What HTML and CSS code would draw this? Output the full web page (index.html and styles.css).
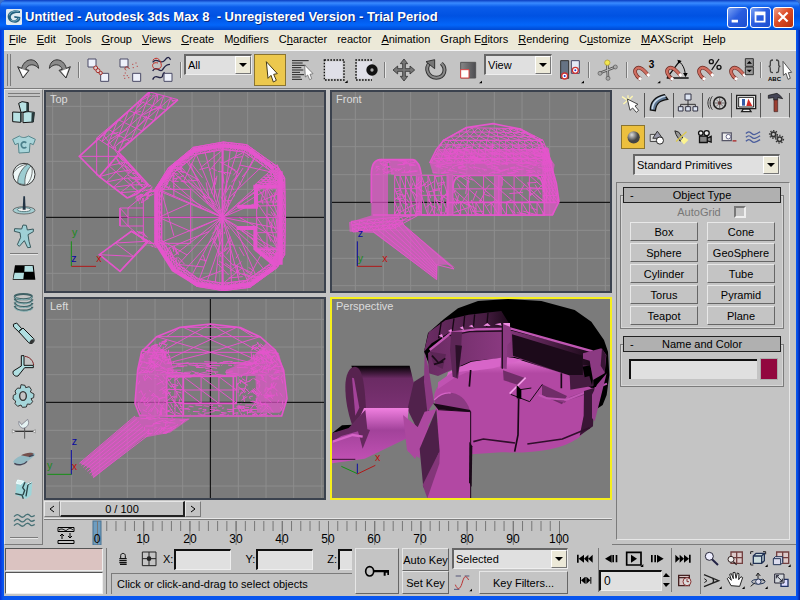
FILE: index.html
```html
<!DOCTYPE html>
<html lang="en">
<head>
<meta charset="utf-8">
<title>Untitled - Autodesk 3ds Max 8</title>
<link rel="stylesheet" href="styles.css">
</head>
<body>
<div class="window">
  <header class="titlebar">
    <svg class="app-icon" viewBox="18 24 48 48" aria-hidden="true"><rect x="18" y="24" width="48" height="48" rx="4" fill="#dfeaf2"/><path d="M60 30C44 24 24 30 23 46c0 14 12 20 24 19 10-1 15-8 14-17L43 45v5l9 2c-2 6-14 8-18 1-5-10 4-19 26-17z" fill="#24617f"/><path d="M56 31c-14-3-26 2-28 12M32 57c8 6 22 3 25-6" fill="none" stroke="#7fb2c9" stroke-width="3"/></svg>
    <h1>Untitled - Autodesk 3ds Max 8&nbsp; - Unregistered Version - Trial Period</h1>
    <div class="window-buttons">
      <button type="button" aria-label="Minimize"><svg viewBox="0 0 21 21"><rect x="4" y="13" width="7" height="3" fill="#fff"/></svg></button>
      <button type="button" aria-label="Maximize"><svg viewBox="0 0 21 21"><path d="M4 4h12v12H4zM6 8v6h8V8z" fill="#fff" fill-rule="evenodd"/></svg></button>
      <button type="button" class="close" aria-label="Close"><svg viewBox="0 0 21 21"><path d="M5 5l10 10M15 5L5 15" stroke="#fff" stroke-width="2.4"/></svg></button>
    </div>
  </header>

  <nav class="menubar" aria-label="Main menu">
    <button type="button"><u>F</u>ile</button>
    <button type="button"><u>E</u>dit</button>
    <button type="button"><u>T</u>ools</button>
    <button type="button"><u>G</u>roup</button>
    <button type="button"><u>V</u>iews</button>
    <button type="button"><u>C</u>reate</button>
    <button type="button">M<u>o</u>difiers</button>
    <button type="button">C<u>h</u>aracter</button>
    <button type="button">reactor</button>
    <button type="button"><u>A</u>nimation</button>
    <button type="button">Graph E<u>d</u>itors</button>
    <button type="button"><u>R</u>endering</button>
    <button type="button">C<u>u</u>stomize</button>
    <button type="button"><u>M</u>AXScript</button>
    <button type="button"><u>H</u>elp</button>
  </nav>

  <div class="toolbar" role="toolbar" aria-label="Main toolbar">
    <span class="grip"></span>
    <button type="button" aria-label="Undo"><svg viewBox="36 159 96 96"><path d="M116 202c-3-34-42-34-51 0l-12-5 16 34 18-23-10-3c6-16 25-19 39-3z" fill="#8a8a8a" stroke="#333" stroke-width="3"/><path d="M58 202l11 25 14-17z" fill="#fff"/></svg></button>
    <button type="button" aria-label="Redo"><svg viewBox="132 159 96 96"><path d="M148 202c3-34 42-34 51 0l12-5-13 34-21-23 10-3c-6-16-25-19-39-3z" fill="#8a8a8a" stroke="#333" stroke-width="3"/><path d="M206 202l-9 25-14-17z" fill="#fff"/></svg></button>
    <span class="sep"></span>
    <button type="button" aria-label="Select and link"><svg viewBox="246 159 96 96"><g fill="#eef1fa" stroke="#4a4a66" stroke-width="3"><path d="M264 174h24v24h-24zM302 217h24v24h-24z"/></g><g fill="#dcc" stroke="#a62f2b" stroke-width="3"><circle cx="287" cy="201" r="6"/><circle cx="294" cy="209" r="6"/><circle cx="302" cy="216" r="5"/></g></svg></button>
    <button type="button" aria-label="Unlink selection"><svg viewBox="342 159 96 96"><g fill="#eef1fa" stroke="#4a4a66" stroke-width="3"><path d="M360 174h24v24h-24zM398 217h24v24h-24z"/></g><path d="M378 208c-10-10 6-16 10-4" fill="none" stroke="#a62f2b" stroke-width="3"/><path d="M396 190h4m-2 10h4m4-14h4m0 10h4M374 216h4m-8 8h4m6 0h4m-12 8h4m8-2h4" stroke="#b55" stroke-width="3"/></svg></button>
    <button type="button" aria-label="Bind to space warp"><svg viewBox="438 159 96 96"><path d="M458 184c12-18 24 10 36-6s14-6 18-2M458 210c10-18 20 4 28-2 8-8 8-18 24-18M458 236c10-20 18 0 28-8 4-4 0-10 8-14" fill="none" stroke="#224" stroke-width="4"/><path d="M458 178c14-16 26 2 26 16 0 10-18 14-24 6s0-18 14-14" fill="none" stroke="#c33028" stroke-width="3"/><path d="M492 217h24v24h-24z" fill="#eef1fa" stroke="#4a4a66" stroke-width="3"/></svg></button>
    <span class="sep"></span>
    <div class="combo tool-combo"><select aria-label="Selection filter"><option>All</option></select><span class="arrow"></span></div>
    <button type="button" class="active" aria-label="Select object"><svg viewBox="762 159 96 96"><path d="M799 182l5 50 9-9 7 20 9-5-8-18 11-2z" fill="#fff" stroke="#443a18" stroke-width="3"/></svg></button>
    <button type="button" aria-label="Select by name"><svg viewBox="858 159 96 96"><path d="M876 179h50m-50 7h32m-32 7h40m-40 7h28m-28 7h34m-34 7h24m-24 7h36m-36 7h26m-26 7h30" stroke="#222" stroke-width="3"/><path d="M914 192l2 36 7-6 6 14 6-3-5-13 9-2z" fill="#fff" stroke="#555" stroke-width="2"/></svg></button>
    <button type="button" aria-label="Rectangular selection region"><svg viewBox="954 159 96 96"><rect x="976" y="181" width="52" height="52" fill="#e0e0e8"/><rect x="973" y="177" width="59" height="60" fill="none" stroke="#111" stroke-width="4" stroke-dasharray="5 4"/><path d="M1043 238v8h-9z"/></svg></button>
    <button type="button" aria-label="Window crossing"><svg viewBox="1050 159 96 96"><rect x="1071" y="181" width="46" height="52" fill="#e0e0e8"/><path d="M1116 177h-48v60h48" fill="none" stroke="#111" stroke-width="4" stroke-dasharray="5 4"/><circle cx="1116" cy="207" r="17" fill="#111"/><circle cx="1116" cy="207" r="5" fill="#aaa"/></svg></button>
    <span class="sep"></span>
    <button type="button" aria-label="Select and move"><svg viewBox="-36 159 96 96"><path d="M12 174l11 14h-7v15h14v-8l14 12-14 12v-8H16v15h7l-11 14-11-14h7v-15h-15v8l-14-12 14-12v8H8v-15H1z" fill="#777" stroke="#333" stroke-width="2.5"/></svg></button>
    <button type="button" aria-label="Select and rotate"><svg viewBox="60 159 96 96"><path d="M124 187c18 17 9 43-15 43s-36-27-20-44" fill="none" stroke="#333" stroke-width="12"/><path d="M124 187c18 17 9 43-15 43s-36-27-20-44" fill="none" stroke="#888" stroke-width="6"/><path d="M78 182l26-6v27z" fill="#777" stroke="#333" stroke-width="3"/></svg></button>
    <button type="button" aria-label="Select and scale"><svg viewBox="156 159 96 96"><defs><linearGradient id="scale-face"><stop offset="0" stop-color="#888"/><stop offset="1" stop-color="#4c4c50"/></linearGradient></defs><path d="M182 184h45v47h-45z" fill="url(#scale-face)" stroke="#555" stroke-width="3"/><path d="M182 206h25v25h-25z" fill="#fff" stroke="#d44" stroke-width="3"/><path d="M246 239v8h-9z"/></svg></button>
    <div class="combo tool-combo"><select aria-label="Reference coordinate system"><option>View</option></select><span class="arrow"></span></div>
    <button type="button" aria-label="Use pivot point center"><svg viewBox="462 159 96 96"><path d="M482 179h24v53h-24z" fill="#667384" stroke="#333" stroke-width="3"/><path d="M514 179h24v38h-24z" fill="#e4e8f6" stroke="#446" stroke-width="3"/><circle cx="494" cy="225" r="9" fill="#fff" stroke="#c33" stroke-width="4"/><circle cx="526" cy="208" r="9" fill="#fff" stroke="#c33" stroke-width="4"/><circle cx="494" cy="225" r="3" fill="#23c"/><circle cx="526" cy="208" r="3" fill="#23c"/><path d="M552 239v8h-9z"/></svg></button>
    <span class="sep"></span>
    <button type="button" aria-label="Select and manipulate"><svg viewBox="576 159 96 96"><path d="M622 188l2 44M600 216l46-18" stroke="#555" stroke-width="8"/><path d="M622 188l2 44M600 216l46-18" stroke="#bbb" stroke-width="3"/><g fill="#aaa" stroke="#555" stroke-width="2"><circle cx="624" cy="232" r="6"/><circle cx="600" cy="217" r="6"/><circle cx="646" cy="198" r="6"/></g><circle cx="622" cy="185" r="8" fill="#f2e650" stroke="#a9932c" stroke-width="2"/></svg></button>
    <span class="sep"></span>
    <button type="button" aria-label="Snaps toggle"><svg viewBox="690 159 96 96"><path d="M722 235c-16-10-22-26-12-33s22 5 36 22" fill="none" stroke="#6b2922" stroke-width="11"/><path d="M722 235c-16-10-22-26-12-33s22 5 36 22" fill="none" stroke="#cf6e60" stroke-width="7"/><path d="M717 231l6 5M742 219l6 6" stroke="#fff" stroke-width="9"/><text x="746" y="200" class="glyph">3</text><path d="M781 239v8h-9z"/></svg></button>
    <button type="button" aria-label="Angle snap toggle"><svg viewBox="786 159 96 96"><path d="M800 231h66M802 229l38-50" stroke="#111" stroke-width="4"/><path d="M838 182c12 10 18 26 18 44" fill="none" stroke="#111" stroke-width="3"/><path d="M832 176l13 4-9 8zM849 216l14 0-6 12z"/><path d="M818 235c-16-10-22-26-12-33s22 5 36 22" fill="none" stroke="#6b2922" stroke-width="11"/><path d="M818 235c-16-10-22-26-12-33s22 5 36 22" fill="none" stroke="#cf6e60" stroke-width="7"/><path d="M813 231l6 5M838 219l6 6" stroke="#fff" stroke-width="9"/></svg></button>
    <button type="button" aria-label="Percent snap toggle"><svg viewBox="882 159 96 96"><path d="M914 235c-16-10-22-26-12-33s22 5 36 22" fill="none" stroke="#6b2922" stroke-width="11"/><path d="M914 235c-16-10-22-26-12-33s22 5 36 22" fill="none" stroke="#cf6e60" stroke-width="7"/><path d="M909 231l6 5M934 219l6 6" stroke="#fff" stroke-width="9"/><g fill="none" stroke="#111" stroke-width="4"><circle cx="934" cy="182" r="6"/><circle cx="957" cy="199" r="6"/><path d="M957 174l-22 33"/></g></svg></button>
    <button type="button" aria-label="Spinner snap toggle"><svg viewBox="978 159 96 96"><path d="M1010 235c-16-10-22-26-12-33s22 5 36 22" fill="none" stroke="#6b2922" stroke-width="11"/><path d="M1010 235c-16-10-22-26-12-33s22 5 36 22" fill="none" stroke="#cf6e60" stroke-width="7"/><path d="M1005 231l6 5M1030 219l6 6" stroke="#fff" stroke-width="9"/><path d="M1036 173h24v23h-24zM1036 198h24v23h-24z" fill="#999" stroke="#333" stroke-width="3"/><path d="M1040 188l8-8 8 8zM1040 206l8 8 8-8z"/></svg></button>
    <span class="sep"></span>
    <button type="button" aria-label="Named selection sets"><svg viewBox="1092 159 96 96"><path d="M1119 177c-9 0-8 4-8 11s0 8-5 8c5 0 5 2 5 9s0 10 8 10M1128 177c9 0 8 4 8 11s0 8 5 8c-5 0-5 2-5 9s0 10-8 10" fill="none" stroke="#444" stroke-width="4"/><text x="1104" y="239" class="glyph tiny">ABC</text><path d="M1149 181l1 42 8-6 6 18 7-3-6-17 10-1z" fill="#fff" stroke="#555" stroke-width="3"/></svg></button>
  </div>

  <main class="workspace">
    <div class="sidebar" role="toolbar" aria-label="reactor toolbar" aria-orientation="vertical">
      <span class="grip"></span>
      <button type="button" aria-label="Rigid body collection"><svg viewBox="21 33 93 93"><g fill="#b8e2e4" stroke="#111" stroke-width="3"><path d="M53 52l10-5 19 3v27l-22 2zM35 78l24 1v30l-24-2zM66 80l10-4 24 3-3 29-31 2z"/></g><path d="M76 50l6 1v26l-6 1zM92 80l8-1-2 29-7 1zM57 80h5v28h-5z" fill="#26393b"/></svg></button>
      <button type="button" aria-label="Cloth collection"><svg viewBox="21 126 93 93"><path d="M55 150c8 6 18 6 27 0l21 10-6 16-10-4-2 27-31 2-2-29-10 4-7-16z" fill="#a9d5da" stroke="#56868c" stroke-width="3"/><path d="M76 170c-10-6-18 2-14 11 3 6 10 6 14 2" fill="none" stroke="#4b7f8a" stroke-width="5"/></svg></button>
      <button type="button" aria-label="Soft body collection"><svg viewBox="21 222 93 93"><circle cx="69" cy="268" r="33" fill="#eef8f8" stroke="#333" stroke-width="3"/><path d="M50 293c0-22 12-42 30-56l10 6c-14 14-20 36-18 55-8 1-16-1-22-5z" fill="#9dcdd2" stroke="#333" stroke-width="2"/><path d="M36 264c10-14 24-24 44-27M92 244c5 18-2 42-14 54" fill="none" stroke="#333" stroke-width="2"/></svg></button>
      <button type="button" aria-label="Rope collection"><svg viewBox="21 315 93 93"><ellipse cx="69" cy="376" rx="33" ry="11" fill="#a5cfd3" stroke="#444" stroke-width="2"/><ellipse cx="69" cy="374" rx="20" ry="6" fill="#eee" stroke="#5a7f83" stroke-width="3"/><path d="M67 334h5l2 40h-9z" fill="#234"/></svg></button>
      <button type="button" aria-label="Deforming mesh collection"><svg viewBox="21 407 93 93"><path d="M66 419l10 1 3 14 18-3v8l-16 9 3 20 5 18-9 1-10-21-15 17-6-5 10-22-2-14-17-4 1-8 21 1z" fill="#9fd0d6" stroke="#39595d" stroke-width="3"/></svg></button>
      <span class="rule"></span>
      <button type="button" aria-label="Plane"><svg viewBox="21 519 93 93"><path d="M42 544h56l5 43H35z" fill="#000"/><path d="M71 546h24l2 17H70zM41 566h28l-2 19H37z" fill="#b3dfe1"/></svg></button>
      <button type="button" aria-label="Spring"><svg viewBox="21 612 93 93"><g fill="none" stroke="#3f6165" stroke-width="6"><ellipse cx="67" cy="638" rx="26" ry="8"/><path d="M41 644c2 18 53 18 53 2M41 655c2 18 53 18 53 2M41 666c2 18 53 18 53 2"/></g><path d="M41 638c2 12 53 12 53 0M41 648c2 15 53 15 53 2M41 659c2 15 53 15 53 2M41 670c2 15 53 15 53 2" fill="none" stroke="#a9d9dc" stroke-width="2"/></svg></button>
      <button type="button" aria-label="Linear dashpot"><svg viewBox="21 705 93 93"><path d="M37 721l10-4 15 17-9 9-15-14zM53 743l13-11 32 32c5 10-6 19-15 12z" fill="#b0dfe1" stroke="#111" stroke-width="3"/><ellipse cx="92" cy="773" rx="5" ry="8" transform="rotate(45 92 773)" fill="#333"/></svg></button>
      <button type="button" aria-label="Angular dashpot"><svg viewBox="21 798 93 93"><path d="M61 815h8v29h28v7H71L51 876c-10 3-18-6-14-15l24-15z" fill="#b0dfe1" stroke="#111" stroke-width="3"/><path d="M72 817c14 2 24 12 26 26" fill="none" stroke="#7a1f1f" stroke-width="3"/></svg></button>
      <button type="button" aria-label="Motor"><svg viewBox="21 891 93 93"><path d="M60 902l12 2 2 7 11-3 6 9-3 7 11 6-1 11-8 3 5 9-7 8-9-1-3 9-12 1-4-7-10 4-8-8 2-8-8-6 1-11 8-4-3-9 8-9 8 1z" fill="#a5d6da" stroke="#333" stroke-width="3"/><ellipse cx="66" cy="936" rx="10" ry="13" fill="#c4c4c4" stroke="#333" stroke-width="4"/></svg></button>
      <button type="button" aria-label="Wind"><svg viewBox="21 984 93 93"><path d="M36 1042h66" stroke="#333" stroke-width="4"/><path d="M71 1032v32" stroke="#555" stroke-width="3"/><path d="M54 1012l8 10 18-16 3 9c-1 12-8 16-17 18-10-3-14-12-12-21z" fill="#e4f2f2" stroke="#667" stroke-width="2"/><path d="M34 1037l10 5-10 5zM103 1037l-8 5 8 5z" fill="#fff" stroke="#333" stroke-width="1"/></svg></button>
      <button type="button" aria-label="Toy car"><svg viewBox="21 1077 93 93"><path d="M36 1134c8-18 36-22 48-28 12-2 20 2 18 8l-22 18c-12 12-36 12-44 2z" fill="#93bac4"/><path d="M60 1114c12-8 32-10 38-5l-12 10z" fill="#75504d"/><path d="M40 1138c12 8 30 4 38-6M84 1118l14-5" stroke="#445" stroke-width="4" fill="none"/></svg></button>
      <button type="button" aria-label="Fracture"><svg viewBox="21 1167 93 93"><path d="M48 1184l22 3 4 8 20-5-3 40-16 12-32-13z" fill="#9ed5d9"/><path d="M72 1192l-7 16 6 8-5 14M43 1226l20 4 4 11M91 1192l-10 6-6 36" fill="none" stroke="#2b4548" stroke-width="4"/><path d="M50 1185l18 4-8 9-14-3zM78 1198l14-7" stroke="#eff" stroke-width="3" fill="#dff2f2"/></svg></button>
      <button type="button" aria-label="Water"><svg viewBox="21 1259 93 93"><path d="M39 1294c7-8 12-8 18-2s11 4 15-1 10-6 15 0 8 3 14-1M39 1308c7-8 12-8 18-2s11 4 15-1 10-6 15 0 8 3 14-1M39 1321c7-8 12-8 18-2s11 4 15-1 10-6 15 0 8 3 14-1" fill="none" stroke="#456f74" stroke-width="4"/></svg></button>
      <span class="rule"></span>
    </div>

    <div class="stage">
      <div class="viewports">
        <section class="viewport" aria-label="Top viewport">
          <svg viewBox="18 12 834 597" preserveAspectRatio="xMidYMid slice">
            <path class="grid" d="M38 0V620M122 0V620M206 0V620M290 0V620M374 0V620M456 0V620M539 0V620M623 0V620M707 0V620M791 0V620M0 55H860M0 139H860M0 220H860M0 304H860M0 472H860M0 556H860"/>
            <path class="axis" d="M0 388H860"/>
            <path class="mesh" id="mesh-top"/>
            <path class="mesh bold" d="M330 10L118 205L178 266L262 330M414 35L235 192L325 290L290 318L262 330M178 266L235 200M178 500L240 550L325 460L274 430ZM240 360v54M350 300V465L400 545M590 355h60v-62M590 422h58v62h66M547 170V600"/>
            <path class="mesh heavy" d="M400 234L350 304V466L400 545L470 588L550 600L630 590L706 536M400 234L465 185L550 172L620 180L700 240M722 250V530"/>
            <path class="mesh heavy" d="M640 296h70M648 296v60h-55M590 420h56v62l60 50"/>
            <path class="ax-y" d="M94 460v74"/><path class="ax-x" d="M94 535h74"/>
            <text x="96" y="444" class="t-y">y</text><text x="94" y="522" class="t-z">z</text><text x="169" y="522" class="t-x">x</text>
          </svg>
          <h2>Top</h2>
        </section>
        <section class="viewport" aria-label="Front viewport">
          <svg viewBox="12 12 834 597" preserveAspectRatio="xMidYMid slice">
            <path class="grid" d="M82 0V620M166 0V620M248 0V620M332 0V620M416 0V620M499 0V620M582 0V620M665 0V620M748 0V620M832 0V620M0 94H860M0 176H860M0 260H860M0 427H860M0 511H860M0 593H860"/>
            <path class="axis" d="M0 343H860"/>
            <path class="mesh fill" d="M305 225l25-40h320l30 45-5 32-30 2-60-5H370l-55-2zM355 250h20v132h-20zM498 260h24v122h-24zM645 262h36l10 80-15 40h-30zM130 382V260q0-45 30-48l20 4v166zM180 215h75q20 5 25 45h-90zM265 240l15 20v122h-14zM132 382l80 0 5 20 165 138-25-10-28 0-2 45-190-140-72-4-2-28z"/>
            <path class="mesh" id="mesh-front"/>
            <path class="mesh bold" d="M305 225l20-40 22-28 68-38 80-12 82 16 60 38 28 55 20 70 8 55-20 40H135M130 345v-85q0-42 25-45h100q20 5 25 45M375 300q0-38 35-38h88M522 262h90q35 0 35 50M355 343h330"/>
            <path class="ax-z" d="M88 460v74"/><path class="ax-x" d="M88 535h74"/>
            <text x="89" y="446" class="t-z">z</text><text x="89" y="522" class="t-y">y</text><text x="163" y="522" class="t-x">x</text>
          </svg>
          <h2>Front</h2>
        </section>
        <section class="viewport" aria-label="Left viewport">
          <svg viewBox="138 27 834 597" preserveAspectRatio="xMidYMid slice">
            <path class="grid" d="M215 0V640M299 0V640M382 0V640M465 0V640M548 0V640M715 0V640M798 0V640M881 0V640M965 0V640M120 88H990M120 171H990M120 254H990M120 421H990M120 505H990M120 588H990"/>
            <path class="axis" d="M120 337H990M631 0V640"/>
            <path class="mesh fill" d="M413 240l10-45 45-35 45 55 10 30 60 10-10 8h-70v113h-78l-18-39zM850 240l-12-45-40-35-50 50-70 30v18h88l5 110h68l20-30zM405 380L240 520l30 15 10 30 150-122 80-15 60-42z"/>
            <path class="mesh" id="mesh-left"/>
            <path class="mesh bold" d="M413 240l12-55 45-45 70-28 91-10 90 11 60 28 45 40 25 60 10 85-16 52H420l-15-38zM500 258h210M540 340h170M550 260v115M700 260v115"/>
            <path class="ax-z" d="M214 480v74"/><path class="ax-y" d="M142 553h72"/>
            <text x="215" y="464" class="t-z">z</text><text x="141" y="538" class="t-y">y</text><text x="215" y="539" class="t-x">x</text>
          </svg>
          <h2>Left</h2>
        </section>
        <section class="viewport current" aria-label="Perspective viewport">
          <svg viewBox="12 12 834 597" preserveAspectRatio="xMidYMid slice">
            <defs>
              <linearGradient id="tube" x2="0" y2="1"><stop offset="0" stop-color="#000"/><stop offset=".3" stop-color="#6b2b64"/><stop offset="1" stop-color="#7a3172"/></linearGradient>
              <linearGradient id="wall"><stop offset="0" stop-color="#6a2b63"/><stop offset=".45" stop-color="#8a3980"/><stop offset="1" stop-color="#150713"/></linearGradient>
              <linearGradient id="slope" x2="0" y2="1"><stop offset="0" stop-color="#f080e0"/><stop offset=".4" stop-color="#a2429a"/><stop offset="1" stop-color="#c452b6"/></linearGradient>
              <linearGradient id="floor" x2="0" y2="1"><stop offset="0" stop-color="#e878d8"/><stop offset=".16" stop-color="#b248a3"/><stop offset="1" stop-color="#b248a3"/></linearGradient>
              <linearGradient id="rim"><stop offset="0" stop-color="#6d2d66"/><stop offset=".7" stop-color="#461c41"/><stop offset="1" stop-color="#190817"/></linearGradient>
            </defs>
            <path fill="#000" d="M288 170l12-56 48-42 42-32 60-22 90-6 100 6 100 27 50 35 38 55 12 35 4 70-8 60-12 30-30 20-250-130-240-10z"/>
            <path fill="url(#rim)" d="M288 170l14-58 50-36 70-17 98-11 28 45-60 18-125 2-52 32z"/>
            <path d="M340 80l-8 50M378 70l-6 45M410 62l-4 42M440 58l-4 42M480 54l-4 42" stroke="#160814" stroke-width="4"/>
            <path fill="#ef8be2" d="M332 122l10-5 4 12zM360 108l10-6 4 12zM395 98l10-4 3 12zM422 94l10-5 6 9zM466 92l12-8 10 9zM500 88l18-4 4 8zM526 84h20v13h-20z"/>
            <path fill="url(#wall)" d="M300 175l64-60 158-15 278 70-5 110-60-30-175-64-130 12-100 45-28-8z"/>
            <path fill="#1c0a1a" d="M552 118l212 64-2 62-35-2-172-60z"/>
            <path d="M305 165l65-52 75-10 104-2 245 68" fill="none" stroke="#c157b4" stroke-width="7"/>
            <path d="M365 122l60-12 100-2" fill="none" stroke="#220d20" stroke-width="4"/>
            <path fill="url(#floor)" d="M318 305C325 255 390 205 475 195L555 188L730 243L800 285C815 330 800 385 752 428C700 465 620 475 520 472L430 478L240 470L235 430L330 380Z"/>
            <path fill="#d765c8" d="M360 232l70-32 105-14 50 8-90 26-80 10-60 20z"/>
            <path fill="#c053b2" d="M330 262l40-28 60-8-50 22-50 34z"/>
            <path fill="#5c2656" d="M306 170l48 8-10 44-28-14zM370 110h32l-4 76-8 65-16-6-8-80z"/>
            <path d="M312 182l20 22 20-14M318 208l28-8" stroke="#1c0a1a" stroke-width="5" fill="none"/>
            <path fill="#2b1029" d="M382 150l20 2-8 60-8 36z"/>
            <path fill="#8b3a82" d="M523 86l25 10v44l-10 10-2 72-18-3z"/>
            <path d="M523 86v135" stroke="#220d20" stroke-width="4"/>
            <path fill="#702d68" d="M525 226l68 24-22 20-44-14zM642 268l75 35-15 25-60-28z"/>
            <path fill="#8a3980" d="M640 302l70 22 15-18 90-32-10 14-92 30-40-4z"/>
            <path fill="#451b40" d="M725 240l40 0 0-30 28 2 4 60-70 12z"/>
            <path fill="#000" d="M764 215l22-4 10 30-4 30-8-28-14 4z"/>
            <path fill="#8b3a82" d="M765 175l55-15 15 20-5 55-35 20-10-58-20-6z"/>
            <path d="M632 300l25 10 60 4 120-48" fill="none" stroke="#c157b4" stroke-width="6"/>
            <path fill="#3a1636" d="M768 288l32-10-5 116-40 28 12-60zM822 160l12 20-4 52-12-20z"/>
            <path fill="#9a4190" d="M836 235l-16 64-20 80-8-10v-70l15-30z"/>
            <path d="M605 320l38-52M605 320l-57-22M570 285l40-6" fill="none" stroke="#1b0919" stroke-width="3"/>
            <path d="M545 296l48-48" stroke="#f5a0ea" stroke-width="5"/>
            <path fill="#000" d="M566 270l14 14v28l-14-2z"/>
            <path d="M572 310l-2 110-10 50M428 225l-4 50M700 235v45" fill="none" stroke="#190817" stroke-width="5"/>
            <path d="M436 440l30-8 95 12M598 447l105-15 82-34" fill="none" stroke="#300f2c" stroke-width="5"/>
            <path fill="#8b3a82" d="M318 315c30-35 90-30 108 32l-98-5z"/>
            <path d="M318 315c15-15 32-23 50-21" fill="none" stroke="#d765c8" stroke-width="4"/>
            <path fill="#190817" d="M315 325l112 20v6l-97-8z"/>
            <path fill="#51224c" d="M256 262l34-22 14 110-32 62-34-70 2-40z"/>
            <path fill="#8b3a82" d="M290 170l12 52 16 100-20 30-10-92z"/>
            <path fill="url(#tube)" d="M70 212h175l12 50-18 78H110z"/>
            <path fill="#57234f" d="M52 275c0-35 12-60 28-60 22 0 30 45 34 130l-42 44c-12-35-20-74-20-114z"/>
            <path fill="#a4439a" d="M72 248l6 2 16 88-12 24z"/>
            <path fill="url(#slope)" d="M108 339h134l-8 92-124 60-98 14v-70l68-35z"/>
            <path fill="#000" d="M12 415l30-24 32-2-12 14z"/>
            <path fill="#65295e" d="M12 440v-25l50-16 50-54 6 58 8 2-22 56-14-52-50 14z"/>
            <path fill="#ac489f" d="M225 360l55 45-5 85-38-24zM290 350l36-8-50 100-14 50-24-26z"/>
            <path d="M14 440l60-20 30 5" fill="none" stroke="#d765c8" stroke-width="7"/>
            <path d="M12 493h70" stroke="#3a1636" stroke-width="3"/>
            <path fill="#b248a3" d="M329 344l98 6 2 262H299l-12-64 42-78z"/>
            <path fill="#4d2049" d="M325 343l10 126-49 110-11-118z"/>
            <path fill="#833679" d="M336 466l-2 40-36 104-14-40z"/>
            <path d="M330 344l98 6v260" fill="none" stroke="#1b0919" stroke-width="3"/>
            <path fill="#1b0919" d="M424 440l9 14-2 122-8-14z"/>
            <path class="ax-y" d="M40 514l48 22"/><path class="ax-z" d="M88 506v30"/><path class="ax-x" d="M88 537l54-26"/>
            <text x="141" y="498" class="t-x">x</text>
          </svg>
          <h2>Perspective</h2>
        </section>
      </div>

      <div class="time-slider">
        <button type="button" aria-label="Previous frame"><svg viewBox="0 0 14 14"><path d="M9 4L5 7l4 3" fill="none" stroke="#000"/></svg></button>
        <button type="button" class="thumb">0 / 100</button>
        <button type="button" aria-label="Next frame"><svg viewBox="0 0 14 14"><path d="M5 4l4 3-4 3" fill="none" stroke="#000"/></svg></button>
      </div>
      <div class="trackbar">
        <button type="button" aria-label="Open mini curve editor"><svg viewBox="0 0 18 18"><path d="M1 1.500h16v4H1zM1 14.500h16v3H1z" fill="none" stroke="#000"/><path d="M2 4c4-3 6 2 8 0s4-2 6 0" fill="none" stroke="#000"/><path d="M5 8v5M3 10l2-2 2 2M13 7v5M11 10l2 2 2-2" fill="none" stroke="#000"/></svg></button>
        <svg class="ruler" viewBox="80 520 532 25" preserveAspectRatio="xMinYMin slice" role="img" aria-label="Frames 0 to 100">
          <rect x="93" y="521" width="8" height="24" fill="#6e9dc0" stroke="#48718f"/>
          <path d="M97 526H560" stroke="#777" stroke-width="10" stroke-dasharray="1 8.240"/>
          <path d="M97 533H560" stroke="#777" stroke-width="24" stroke-dasharray="1 45.200"/>
          <g text-anchor="middle"><text x="97" y="543">0</text><text x="143" y="543">10</text><text x="190" y="543">20</text><text x="236" y="543">30</text><text x="282" y="543">40</text><text x="328" y="543">50</text><text x="374" y="543">60</text><text x="420" y="543">70</text><text x="467" y="543">80</text><text x="513" y="543">90</text><text x="559" y="543">100</text></g>
        </svg>
      </div>
    </div>

    <aside class="panel" aria-label="Command panel">
      <div class="tabs">
        <button type="button" class="selected" aria-label="Create"><svg viewBox="12 12 84 84"><path d="M30 38l18 12M34 60l12-10M48 34v16M62 36L48 50" stroke="#fff7b0" stroke-width="4"/><path d="M46 45l8 34 8-7 11 13 7-6-11-13 9-5z" fill="#fff" stroke="#444" stroke-width="3"/></svg></button>
        <button type="button" aria-label="Modify"><svg viewBox="96 12 84 84"><path d="M112 78c0-24 16-40 42-46l10 14c-24 3-34 12-37 34z" fill="#5d7692" stroke="#111" stroke-width="4"/><path d="M118 76c0-22 15-34 40-40" fill="none" stroke="#c8d9ea" stroke-width="5"/></svg></button>
        <button type="button" aria-label="Hierarchy"><svg viewBox="183 12 84 84"><path d="M225 46v24M203 70V61h44v9" fill="none" stroke="#333" stroke-width="3"/><g fill="#dde5f2" stroke="#334" stroke-width="3"><path d="M216 30h18v18h-18zM196 68h14v13h-14zM218 68h14v13h-14zM240 68h14v13h-14z"/></g></svg></button>
        <button type="button" aria-label="Motion"><svg viewBox="270 12 84 84"><circle cx="320" cy="57" r="18" fill="#ccc" stroke="#222" stroke-width="5"/><circle cx="320" cy="57" r="5" fill="#922"/><path d="M320 42v30M305 57h30M309 46l22 22M331 46l-22 22" stroke="#444" stroke-width="2"/><path d="M298 37c-9 11-9 29 0 40M290 40c-7 10-7 24 0 34" fill="none" stroke="#333" stroke-width="3"/></svg></button>
        <button type="button" aria-label="Display"><svg viewBox="357 12 84 84"><path d="M371 34h57v40h-57zM391 75h18l5 8h-28z" fill="#eee" stroke="#222" stroke-width="4"/><path d="M377 40h45v29h-45z" fill="#fff" stroke="#222" stroke-width="3"/><path d="M387 45h9v20h-9z" fill="#345ca8"/><path d="M400 66l6-22 12 22z" fill="#d42a25"/></svg></button>
        <button type="button" aria-label="Utilities"><svg viewBox="441 12 84 84"><path d="M463 34l26-6 10 7 7 9-15-3v7h-12v-7l-16 2z" fill="#445" stroke="#111" stroke-width="2"/><path d="M480 48h11v35h-11z" fill="#9c3e30" stroke="#422" stroke-width="2"/></svg></button>
      </div>
      <div class="categories">
        <button type="button" class="active" aria-label="Geometry"><svg viewBox="29 122 68 68"><defs><radialGradient id="ball" cx=".35" cy=".3"><stop offset="0" stop-color="#ddd"/><stop offset="1" stop-color="#444"/></radialGradient></defs><circle cx="65" cy="157" r="19" fill="url(#ball)"/></svg></button>
        <button type="button" aria-label="Shapes"><svg viewBox="101 122 68 68"><path d="M114 148h24v22h-24z" fill="#ddd" stroke="#444" stroke-width="3"/><path d="M136 138l16 22h-30z" fill="#99a" stroke="#333" stroke-width="3"/><circle cx="144" cy="167" r="11" fill="#fff" stroke="#222" stroke-width="3"/></svg></button>
        <button type="button" aria-label="Lights"><svg viewBox="173 122 68 68"><path d="M188 137l12 4 14 20-10 8-12-20z" fill="#999" stroke="#222" stroke-width="3"/><path d="M206 167l10-12 14 10-14 14z" fill="#fcf490"/><path d="M192 170l32-30" stroke="#ddc94c" stroke-width="4"/></svg></button>
        <button type="button" aria-label="Cameras"><svg viewBox="245 122 68 68"><path d="M262 153h24v20h-24zM286 160l12-6v18l-12-4z" fill="#888" stroke="#111" stroke-width="4"/><circle cx="266" cy="144" r="7" fill="#eee" stroke="#111" stroke-width="4"/><circle cx="284" cy="144" r="8" fill="#eee" stroke="#111" stroke-width="4"/></svg></button>
        <button type="button" aria-label="Helpers"><svg viewBox="317 122 68 68"><path d="M330 143h28v24h-28z" fill="#eee" stroke="#556" stroke-width="4"/><circle cx="349" cy="155" r="7" fill="#fff" stroke="#668" stroke-width="3"/><path d="M362 168h12" stroke="#a22" stroke-width="4"/></svg></button>
        <button type="button" aria-label="Space warps"><svg viewBox="389 122 68 68"><path d="M401 145c8-8 12-6 18 0s12 4 26-5M401 157c8-8 12-6 18 0s12 4 26-5M401 169c8-8 12-6 18 0s12 4 26-5" fill="none" stroke="#4a5d9c" stroke-width="4"/></svg></button>
        <button type="button" aria-label="Systems"><svg viewBox="461 122 68 68"><g fill="none" stroke="#333"><circle cx="484" cy="148" r="7" stroke-width="5"/><circle cx="484" cy="148" r="12" stroke-width="4" stroke-dasharray="4 5"/><circle cx="503" cy="163" r="7" stroke-width="5"/><circle cx="503" cy="163" r="12" stroke-width="4" stroke-dasharray="4 5"/></g></svg></button>
      </div>
      <div class="combo category-combo"><select aria-label="Object category"><option>Standard Primitives</option></select><span class="arrow"></span></div>
      <div class="rollups">
        <section class="rollup">
          <h2><button type="button"><span>-</span>Object Type</button></h2>
          <div class="rollup-body">
            <label class="autogrid">AutoGrid <input type="checkbox" disabled></label>
            <div class="object-types">
              <button type="button">Box</button><button type="button">Cone</button>
              <button type="button">Sphere</button><button type="button">GeoSphere</button>
              <button type="button">Cylinder</button><button type="button">Tube</button>
              <button type="button">Torus</button><button type="button">Pyramid</button>
              <button type="button">Teapot</button><button type="button">Plane</button>
            </div>
          </div>
        </section>
        <section class="rollup">
          <h2><button type="button"><span>-</span>Name and Color</button></h2>
          <div class="rollup-body name-row">
            <input type="text" aria-label="Object name">
            <button type="button" class="swatch" aria-label="Object color"></button>
          </div>
        </section>
      </div>
    </aside>
  </main>

  <footer class="statusbar">
    <div class="listener">
      <input type="text" class="macro" aria-label="Macro recorder">
      <input type="text" aria-label="Script listener">
    </div>
    <div class="status">
      <div class="coords">
        <button type="button" aria-label="Selection lock"><svg viewBox="110 170 48 48"><path d="M125 192v-8c0-9 14-9 14 0v8" transform="translate(2)" fill="none" stroke="#111" stroke-width="3"/><path d="M123 193h22M123 199h22M123 205h22M125 210h20" stroke="#111" stroke-width="4"/></svg></button>
        <button type="button" aria-label="Absolute mode"><svg viewBox="424 170 48 48"><path d="M428 173h41v41h-41zM448 173v41M428 193h41" fill="none" stroke="#222" stroke-width="3"/><circle cx="448" cy="193" r="7" fill="#222"/></svg></button>
        <label>X:<input type="text"></label>
        <label>Y:<input type="text"></label>
        <label>Z:<input type="text"></label>
      </div>
      <output>Click or click-and-drag to select objects</output>
    </div>
    <button type="button" class="set-keys" aria-label="Set keys"><svg viewBox="1080 195 96 60"><ellipse cx="1106" cy="226" rx="12" ry="14" fill="none" stroke="#000" stroke-width="5"/><path d="M1117 222h47v15h-5v-7h-5v9h-6v-10h-31z"/></svg></button>
    <div class="auto-set">
      <button type="button">Auto Key</button>
      <button type="button">Set Key</button>
    </div>
    <div class="key-options">
      <div class="combo"><select aria-label="Selection list"><option>Selected</option></select><span class="arrow"></span></div>
      <div class="filters">
        <button type="button" class="flat" aria-label="Default tangents"><svg viewBox="158 232 66 66"><path d="M169 244h16M196 244h14M164 284h16" stroke="#557" stroke-width="3"/><path d="M168 270c6 16 14 16 20-4s10-28 20-10" fill="none" stroke="#b33" stroke-width="3"/><path d="M218 282v8h-8z"/></svg></button>
        <button type="button">Key Filters...</button>
      </div>
    </div>
    <div class="playback">
      <div class="play-row">
        <button type="button" aria-label="Go to start"><svg viewBox="516 162 72 66"><path d="M528 182h5v24h-5zM549 182v24l-16-12zM562 182v24l-13-12zM575 182v24l-13-12z"/></svg></button>
        <div class="transport">
          <button type="button" aria-label="Previous frame"><svg viewBox="594 162 72 66"><path d="M612 194l20-12v24zM634 183h5v22h-5zM644 183h5v22h-5z"/></svg></button>
          <button type="button" aria-label="Play animation"><svg viewBox="666 162 72 66"><path d="M677 175h43v38h-43z" fill="none" stroke="#000" stroke-width="5"/><path d="M690 182l18 12-18 12z"/><path d="M727 210v9h-9z"/></svg></button>
          <button type="button" aria-label="Next frame"><svg viewBox="735 162 72 66"><path d="M747 183h5v22h-5zM757 183h5v22h-5zM765 182l20 12-20 12z"/></svg></button>
        </div>
        <button type="button" aria-label="Go to end"><svg viewBox="813 162 72 66"><path d="M823 182l13 12-13 12zM836 182l13 12-13 12zM849 182l15 12-15 12zM864 182h5v24h-5z"/></svg></button>
      </div>
      <div class="play-row">
        <button type="button" aria-label="Key mode toggle"><svg viewBox="516 228 72 66"><path d="M537 249h3v20h-3zM552 249v20l-12-10zM557 249l11 10-11 10zM568 249h3v20h-3zM553 249h3v20h-3z"/></svg></button>
        <div class="frame">
          <input type="text" value="0" aria-label="Current frame">
          <div class="spinner"><button type="button" aria-label="Increase frame"><svg viewBox="0 0 9 10"><path d="M1 7l3-4 4 4z"/></svg></button><button type="button" aria-label="Decrease frame"><svg viewBox="0 0 9 10"><path d="M1 3l3 4 4-4z"/></svg></button></div>
        </div>
        <button type="button" aria-label="Time configuration"><svg viewBox="822 228 72 66"><path d="M842 244h32v31h-32zM842 251h32" fill="#d8c5c5" stroke="#422" stroke-width="4"/><circle cx="867" cy="263" r="12" fill="#ddd" stroke="#833" stroke-width="3"/><path d="M867 255v8h6" fill="none" stroke="#833" stroke-width="3"/></svg></button>
      </div>
    </div>
    <div class="navigation">
      <button type="button" aria-label="Zoom"><svg viewBox="900 162 69 66"><path d="M933 196l18 17" stroke="#224" stroke-width="6"/><circle cx="925" cy="187" r="12" fill="#eef" stroke="#223" stroke-width="3"/></svg></button>
      <button type="button" aria-label="Zoom all"><svg viewBox="969 162 69 66"><path d="M990 174h34v34h-34zM1007 174v34M990 191h34" fill="#dccaca" stroke="#734040" stroke-width="4"/><circle cx="990" cy="196" r="9" fill="#eee" stroke="#322" stroke-width="3"/><path d="M997 203l10 9" stroke="#322" stroke-width="4"/></svg></button>
      <button type="button" aria-label="Zoom extents"><svg viewBox="1038 162 69 66"><path d="M1049 180v-7h8M1086 173h8v8M1049 206v7h8" fill="none" stroke="#222" stroke-width="3"/><path d="M1057 186l8-8h25v22l-8 8h-25zM1057 186h25v22M1082 186l8-8" fill="#cdd" stroke="#235" stroke-width="4"/><path d="M1100 211v8h-8z"/></svg></button>
      <button type="button" aria-label="Zoom extents all"><svg viewBox="1107 162 69 66"><path d="M1127 174h36v34h-36zM1145 174v34M1127 191h36" fill="#dccaca" stroke="#734040" stroke-width="4"/><path d="M1117 194l6-6h22v18l-6 6h-22zM1117 194h22v18" fill="#dde" stroke="#235" stroke-width="3"/><path d="M1169 211v8h-8z"/></svg></button>
      <button type="button" aria-label="Field of view"><svg viewBox="900 228 69 66"><path d="M909 242l44 18-44 18M935 252q5 9 0 15" fill="none" stroke="#222" stroke-width="4"/><path d="M910 254l8 6-8 6" fill="none" stroke="#222" stroke-width="3"/><path d="M962 277v8h-8z"/></svg></button>
      <button type="button" aria-label="Pan"><svg viewBox="969 228 69 66"><path d="M990 275l-11-21 4-4 8 9-5-18 5-2 6 15-1-18 6-1 3 18 4-16 5 2-1 18 7-9 5 3-9 26z" fill="#fff" stroke="#222" stroke-width="3"/><path d="M1031 277v8h-8z"/></svg></button>
      <button type="button" aria-label="Arc rotate"><svg viewBox="1038 228 69 66"><ellipse cx="1072" cy="263" rx="20" ry="7" fill="none" stroke="#235" stroke-width="3"/><circle cx="1072" cy="263" r="8" fill="#dde" stroke="#235" stroke-width="3"/><path d="M1071 254v-15M1065 246l6-9 7 9M1061 267l-12 10M1092 261l-7-6" fill="none" stroke="#222" stroke-width="3"/><path d="M1100 277v8h-8z"/></svg></button>
      <button type="button" aria-label="Maximize viewport"><svg viewBox="1107 228 69 66"><path d="M1140 256h21v21h-21z" fill="#ddf" stroke="#236" stroke-width="4"/><path d="M1121 240h28v27h-28z" fill="#d4d8dc" stroke="#223" stroke-width="3"/><path d="M1126 245l18 17M1126 253v-8h8M1144 254v8h-8" fill="none" stroke="#223" stroke-width="3"/></svg></button>
    </div>
  </footer>
</div>
<script src="meshes.js"></script>
</body>
</html>
```
FILE: styles.css
```css
:root {
  --face: #c4c4c4;
  --light: #e6e6e6;
  --dark: #7b7b7b;
  --field: #e0e0e0;
  --mesh: #e455cc;
}

* { box-sizing: border-box; }

body {
  margin: 0;
  background: #3c6fc8;
  color: #000;
  font: 11px/14px "Liberation Sans", Arial, sans-serif;
}

button, input, select {
  font: inherit;
  color: inherit;
  margin: 0;
  padding: 0;
  border: 0;
  border-radius: 0;
  background: none;
}

h1, h2 { margin: 0; font: inherit; }
svg { display: block; }

.window {
  display: flex;
  flex-direction: column;
  height: 100vh;
  min-height: 560px;
  padding: 0 4px 4px;
  border-radius: 7px 7px 0 0;
  background: linear-gradient(90deg, #0831d9, #0855ee 3px, #0855ee calc(100% - 3px), #001ea0);
}

/* Title bar */
.titlebar {
  display: flex;
  align-items: center;
  gap: 3px;
  flex: none;
  height: 30px;
  margin: 0 -4px;
  padding: 4px 6px 0;
  border-radius: 7px 7px 0 0;
  background: linear-gradient(#0a3cc0, #3a8bff 3px, #0a5cea 7px, #0052e2 16px, #0366fa 25px, #0048d0 30px);
}
.app-icon { width: 16px; height: 16px; }
.titlebar h1 {
  flex: 1;
  color: #fff;
  font: bold 13px/16px "Liberation Sans", Arial, sans-serif;
  text-shadow: 1px 1px #0a2a80;
  white-space: nowrap;
}
.window-buttons { display: flex; gap: 2px; }
.window-buttons button {
  width: 21px;
  height: 21px;
  border: 1px solid #fff;
  border-radius: 3px;
  background: linear-gradient(135deg, #7ba2f4, #2a5ee0 45%, #1c4fd0);
}
.window-buttons .close { background: linear-gradient(135deg, #f0a088, #dd4b26 45%, #b8300c); }
.window-buttons svg { width: 19px; height: 19px; }

/* Menu bar */
.menubar {
  display: flex;
  gap: 10px;
  flex: none;
  height: 20px;
  padding: 0 0 2px 5px;
  background: #ece9d8;
  white-space: nowrap;
}

/* Main toolbar */
.toolbar {
  display: flex;
  align-items: center;
  flex: none;
  height: 39px;
  background: var(--face);
  border-top: 1px solid #f4f4f4;
  border-bottom: 1px solid var(--dark);
}
.toolbar button { width: 32px; height: 32px; flex: none; }
.toolbar button svg { width: 32px; height: 32px; }
.toolbar .active { border: 1px solid #8a7430; background: #ecc84e; }
.toolbar .active svg { margin: -1px; }
.toolbar .grip {
  width: 4px;
  height: 32px;
  margin: 0 1px 0 3px;
  border: solid var(--dark);
  border-width: 0 1px;
}
.toolbar .sep {
  flex: none;
  width: 2px;
  height: 16px;
  margin: 0 2px;
  border-left: 1px solid var(--dark);
  border-right: 1px solid var(--light);
}
.glyph { font: bold 30px "Liberation Sans", Arial, sans-serif; }
.glyph.tiny { font-size: 18px; }

.combo {
  display: flex;
  height: 21px;
  border: 1px solid;
  border-width: 2px 1px 1px 2px;
  border-color: #666 #eee #eee #666;
  background: var(--field);
}
.combo select {
  flex: 1;
  min-width: 0;
  padding-left: 2px;
  appearance: none;
}
.combo .arrow {
  display: flex;
  align-items: center;
  justify-content: center;
  width: 16px;
  border: 1px solid;
  border-color: #fff #777 #777 #fff;
  background: #ece9d8;
  pointer-events: none;
}
.arrow::after {
  content: "";
  border: 4px solid transparent;
  border-top-color: #000;
  border-bottom: 0;
}
.tool-combo { flex: none; align-self: flex-start; width: 68px; margin: 3px 2px 0 0; }

/* Work area */
.workspace {
  display: flex;
  flex: 1;
  min-height: 0;
  background: var(--face);
}

.sidebar {
  display: flex;
  flex-direction: column;
  align-items: center;
  flex: none;
  width: 39px;
  padding: 3px 0 0;
  border: 1px solid;
  border-color: var(--light) var(--dark) var(--dark) var(--light);
}
.sidebar .grip { width: 32px; height: 4px; border: solid var(--dark); border-width: 1px 0; flex: none; }
.sidebar button { flex: none; width: 31px; height: 31px; }
.sidebar svg { width: 31px; height: 31px; }
.sidebar .rule { flex: none; width: 28px; height: 2px; margin: 1px 0 2px; background: var(--dark); border-bottom: 1px solid var(--light); }

.stage {
  display: flex;
  flex-direction: column;
  flex: 1;
  min-width: 0;
  margin-left: 1px;
}
.viewports {
  display: grid;
  grid-template: repeat(2, minmax(0, 1fr)) / repeat(2, minmax(0, 1fr));
  gap: 4px;
  flex: 1;
  min-height: 0;
  padding-top: 1px;
}
.viewport {
  position: relative;
  min-height: 0;
  border: 2px solid #3b424e;
  background: #7b7b7b;
  overflow: hidden;
}
.viewport.current { border-color: #f6ef1c; }
.viewport svg { width: 100%; height: 100%; }
.viewport h2 { position: absolute; top: 0; left: 4px; color: #dcdcdc; }
.viewport text { font: 32px "Liberation Sans", Arial, sans-serif; }
.grid { stroke: #8d8d8d; stroke-width: 3; }
.axis { stroke: #000; stroke-width: 3; }
.mesh { fill: none; stroke: var(--mesh); stroke-width: 3; }
.mesh.bold { stroke-width: 5; }
.mesh.heavy { stroke-width: 12; }
.mesh.fill { fill: var(--mesh); fill-opacity: .7; stroke: none; }
.ax-x, .ax-y, .ax-z { fill: none; stroke-width: 3; }
.ax-x { stroke: #b01818; }
.ax-y { stroke: #149014; }
.ax-z { stroke: #0c0ca0; }
.t-x { fill: #c01010; }
.t-y { fill: #1a8a1a; }
.t-z { fill: #0808a0; }

.time-slider { display: flex; flex: none; height: 19px; padding: 1px 0; border-bottom: 1px solid var(--light); }
.time-slider button {
  width: 16px;
  border: 1px solid;
  border-color: var(--light) var(--dark) var(--dark) var(--light);
}
.time-slider .thumb { width: 125px; border-right: 2px solid #222; border-bottom: 2px solid #222; line-height: 12px; }
.trackbar { display: flex; flex: none; height: 26px; border-top: 1px solid var(--dark); }
.trackbar button { flex: none; width: 36px; padding: 4px 4px 0 13px; }
.trackbar button svg { width: 18px; height: 18px; }
.ruler { flex: 1; min-width: 0; height: 25px; }
.ruler text { font: 12px "Liberation Sans", Arial, sans-serif; }

/* Command panel */
.panel {
  display: flex;
  flex-direction: column;
  flex: none;
  width: 184px;
  padding: 4px 6px 4px 4px;
  border-bottom: 1px solid var(--dark);
}
.tabs { display: flex; flex: none; }
.tabs button {
  width: 29px;
  height: 25px;
  border-right: 1px solid #555;
  border-bottom: 1px solid var(--light);
}
.tabs button svg { width: 28px; height: 28px; margin-top: -6px; }
.tabs .selected { border-bottom-color: transparent; }
.categories { display: flex; flex: none; margin: 7px 0 0 5px; }
.categories button { width: 24px; height: 24px; border: 1px solid transparent; }
.categories .active { border-color: #8a7430; background: #ecc03e; }
.categories svg { width: 22px; height: 22px; }
.category-combo { flex: none; margin: 5px 10px 7px 17px; }

.rollups {
  flex: 1;
  min-height: 0;
  padding: 4px 5px 0 3px;
  border: 1px solid;
  border-color: var(--dark) var(--light) var(--light) var(--dark);
}
.rollup { margin-bottom: 7px; }
.rollup h2 { position: relative; margin: 0 3px -8px; }
.rollup h2 button {
  display: block;
  width: 100%;
  height: 16px;
  border: 1px solid #222;
  background: #b0b0b0;
}
.rollup h2 span { position: absolute; left: 7px; }
.rollup-body {
  padding: 8px 8px 3px 9px;
  border: 1px solid var(--dark);
  outline: 1px solid #d6d6d6;
  outline-offset: -2px;
}
.autogrid {
  display: flex;
  align-items: center;
  justify-content: center;
  gap: 13px;
  height: 16px;
  margin-bottom: 2px;
  padding-left: 18px;
  color: #777;
}
.autogrid input {
  appearance: none;
  width: 12px;
  height: 12px;
  border: 2px solid;
  border-color: #777 #eee #eee #777;
}
.object-types { display: grid; grid-template-columns: 1fr 1fr; gap: 2px 9px; }
.object-types button {
  height: 19px;
  border: 1px solid;
  border-color: #e8e8e8 #666 #666 #e8e8e8;
}
.name-row { display: flex; gap: 4px; padding: 14px 6px 7px 8px; }
.name-row input {
  flex: 1;
  min-width: 0;
  height: 20px;
  border: solid #111;
  border-width: 2px 0 0 2px;
  background: var(--field);
}
.swatch { width: 16px; background: #92073f; outline: 1px solid #aaa; }

/* Status bar */
.statusbar {
  display: flex;
  gap: 3px;
  flex: none;
  height: 51px;
  padding: 3px 3px 2px 1px;
  background: var(--face);
  white-space: nowrap;
}
.listener { display: flex; flex-direction: column; gap: 1px; width: 98px; }
.listener input {
  flex: 1;
  width: 100%;
  min-height: 0;
  border: 1px solid;
  border-color: #555 #eee #eee #555;
  background: #fff;
}
.listener .macro { background: #dbc3c1; }
.status {
  flex: 1;
  min-width: 0;
  overflow: hidden;
  padding-left: 4px;
  border-left: 1px solid var(--dark);
}
.coords { display: flex; align-items: center; height: 22px; overflow: hidden; }
.coords > button { flex: none; width: 26px; }
.coords svg { width: 16px; height: 16px; margin-left: 4px; }
.coords label { display: flex; align-items: center; gap: 1px; flex: none; margin-right: 14px; }
.coords input {
  width: 57px;
  height: 21px;
  border: 1px solid;
  border-width: 2px 1px 1px 2px;
  border-color: #111 #eee #eee #111;
  background: var(--field);
}
.status output {
  display: block;
  height: 21px;
  margin-top: 3px;
  padding: 3px 5px;
  border: solid var(--dark);
  border-width: 1px 0 0 1px;
}
.set-keys, .auto-set button, .filters button {
  border: 1px solid;
  border-color: var(--light) #666 #666 var(--light);
}
.set-keys { width: 44px; display: flex; align-items: center; justify-content: center; }
.set-keys svg { width: 32px; height: 20px; }
.auto-set { display: grid; grid-template-rows: 1fr 1fr; width: 47px; }
.key-options { display: flex; flex-direction: column; gap: 2px; width: 116px; }
.filters { display: flex; flex: 1; gap: 4px; }
.filters button { flex: 1; }
.filters .flat { flex: none; width: 23px; border: 0; }
.filters svg { width: 22px; height: 22px; }
.playback { flex: none; width: 126px; padding-left: 2px; }
.play-row { display: flex; height: 22px; }
.play-row > button { width: 25px; }
.play-row svg { width: 24px; height: 22px; }
.transport, .frame { display: flex; flex: 1; border-left: 1px solid var(--dark); }
.transport { border-right: 1px solid var(--dark); }
.transport button { flex: 1; }
.frame input {
  width: 63px;
  height: 21px;
  padding-left: 3px;
  border: solid #111;
  border-width: 2px 1px 1px 2px;
  border-right-color: #eee;
  border-bottom-color: #eee;
  background: var(--field);
  font-size: 12px;
}
.spinner { display: flex; flex-direction: column; width: 10px; border-right: 1px solid var(--dark); }
.spinner button { height: 10px; }
.play-row .spinner svg { width: 9px; height: 10px; }
.navigation {
  display: grid;
  grid-template: 22px 22px / repeat(4, 23px);
  border-left: 1px solid var(--dark);
}
.navigation svg { width: 23px; height: 22px; }
```
FILE: meshes.js
```js
// Builds the wireframe geometry for the three orthographic viewports.
let seed = 7;
const rnd = () => (seed = (seed * 16807) % 2147483647) / 2147483647;
const seg = (a, b) => `M${a[0].toFixed(1)} ${a[1].toFixed(1)}L${b[0].toFixed(1)} ${b[1].toFixed(1)}`;
const mix = (a, b, t) => [a[0] + (b[0] - a[0]) * t, a[1] + (b[1] - a[1]) * t];
const at = (q, u, v) => mix(mix(q[0], q[1], u), mix(q[3], q[2], u), v);

// Triangulated quad patch.
function patch(q, nu, nv) {
  let d = "";
  for (let i = 0; i <= nu; i++) {
    for (let j = 0; j <= nv; j++) {
      const p = at(q, i / nu, j / nv);
      if (i < nu) d += seg(p, at(q, (i + 1) / nu, j / nv));
      if (j < nv) d += seg(p, at(q, i / nu, (j + 1) / nv));
      if (i < nu && j < nv) d += seg(p, at(q, (i + 1) / nu, (j + 1) / nv));
    }
  }
  return d;
}

// Irregular edges scattered through a quad.
function edges(q, n, reach) {
  let d = "";
  const clamp = (t) => Math.min(1, Math.max(0, t));
  for (let i = 0; i < n; i++) {
    const u = rnd(), v = rnd();
    d += seg(at(q, u, v), at(q, clamp(u + (rnd() - 0.5) * reach), clamp(v + (rnd() - 0.5) * reach)));
  }
  return d;
}

function strip(outer, inner) {
  let d = "";
  outer.forEach((p, i) => {
    const n = (i + 1) % outer.length;
    d += seg(p, outer[n]) + seg(inner[i], inner[n]) + patch([p, outer[n], inner[n], inner[i]], 6, 3);
  });
  return d;
}

const box = (x1, y1, x2, y2) => [[x1, y1], [x2, y1], [x2, y2], [x1, y2]];

function topMesh() {
  const hub = [547, 388];
  const outer = [[550, 162], [620, 170], [715, 238], [734, 270], [736, 388], [734, 500], [710, 540],
    [630, 598], [550, 608], [470, 595], [400, 545], [345, 465], [345, 304], [385, 240], [460, 178]];
  const inner = outer.map((p) => mix(p, hub, 0.1));
  let d = strip(outer, inner);
  inner.forEach((p, i) => {
    const q = inner[(i + 1) % inner.length];
    if (p[0] > 400 || q[0] > 400) {
      d += seg(p, hub) + seg(mix(p, q, 0.33), hub) + seg(mix(p, q, 0.66), mix(hub, p, 0.3));
    }
    d += seg(mix(p, hub, 0.2), q);
  });
  d += edges([[440, 200], [650, 200], [560, 370], [530, 370]], 36, 0.6);
  d += edges([[530, 410], [560, 410], [650, 570], [440, 570]], 36, 0.6);
  d += "M356 304L547 388L356 466M356 388H547M356 388L452 345L547 388L452 430ZM452 304V466M356 304H452M356 466H452";
  d += patch([[400, 234], [440, 220], [547, 388], [530, 370]], 1, 3);
  d += patch(box(650, 296, 712, 480), 2, 4) + edges(box(650, 296, 712, 480), 20, 0.5);
  d += patch([[645, 290], [712, 230], [730, 290], [730, 300]], 8, 4) + patch([[645, 484], [730, 484], [715, 535], [700, 530]], 8, 4);
  d += patch([[330, 12], [414, 35], [235, 192], [170, 150]], 4, 5) + edges([[330, 12], [414, 35], [235, 192], [170, 150]], 20, 0.5);
  d += "M118 205H250M170 150V262M205 165V240M190 140L235 200";
  d += patch([[178, 266], [235, 200], [325, 290], [262, 330]], 2, 4) + edges([[225, 205], [245, 200], [325, 290], [290, 320]], 50, 0.5);
  d += patch([[178, 500], [274, 430], [320, 460], [240, 550]], 2, 1);
  d += patch(box(240, 360, 264, 414), 1, 2) + "M264 360L325 310H350M264 414L325 466H350M310 330V450M264 388H540M264 360H310M264 414H310";
  d += edges([[285, 330], [330, 290], [352, 310], [300, 350]], 50, 0.6) + edges([[280, 430], [310, 430], [352, 480], [320, 470]], 30, 0.6);
  d += edges([[385, 240], [430, 225], [450, 280], [370, 310]], 30, 0.6) + edges([[355, 465], [400, 470], [440, 540], [400, 545]], 30, 0.6);
  return d;
}

function frontMesh() {
  let d = patch([[345, 157], [645, 157], [672, 225], [310, 225]], 16, 5);
  d += patch([[415, 119], [577, 122], [645, 157], [345, 157]], 9, 3);
  d += edges([[340, 170], [655, 170], [680, 260], [310, 255]], 260, 0.15);
  d += patch(box(280, 262, 360, 382), 4, 2) + edges(box(200, 262, 360, 382), 60, 0.4);
  d += edges(box(375, 262, 500, 382), 24, 0.7) + edges(box(520, 262, 650, 382), 24, 0.7);
  d += patch(box(375, 343, 650, 382), 12, 1) + patch(box(375, 262, 650, 343), 6, 2);
  d += edges([[150, 215], [262, 215], [275, 250], [135, 260]], 60, 0.4) + patch(box(200, 262, 265, 382), 4, 3);
  d += patch([[645, 180], [660, 180], [690, 343], [645, 343]], 4, 8);
  d += patch([[70, 400], [270, 382], [200, 420], [75, 432]], 8, 3);
  for (let i = 0; i <= 6; i++) d += seg([135 + i * 14, 430 - i * 5], [326, 575 - i * 7]);
  d += "M326 575V530L378 543L215 400";
  return d;
}

function leftMesh() {
  let d = "M470 140H780M550 112H710M440 187H820M500 220H760";
  d += "M480 187L631 102L780 187M500 220L631 187L760 220M550 112L780 215M710 112L490 215M470 140L631 187L780 140M500 140L540 112M760 140L715 112";
  d += edges([[425, 180], [500, 150], [520, 250], [415, 250]], 120, 0.5) + edges([[760, 150], [835, 190], [850, 250], [740, 250]], 120, 0.5);
  d += patch(box(550, 260, 710, 340), 3, 2) + patch(box(500, 260, 550, 376), 2, 3);
  d += edges(box(500, 215, 770, 258), 60, 0.35) + edges(box(415, 255, 545, 376), 90, 0.35);
  d += edges(box(710, 255, 848, 376), 110, 0.35) + edges(box(540, 345, 770, 376), 60, 0.2);
  for (let i = 0; i <= 7; i++) d += seg([238 + i * 6, 520 + i * 6], [405 + i * 6, 378 + i * 8]);
  d += edges([[410, 378], [580, 378], [500, 430], [440, 432]], 50, 0.5);
  return d;
}

document.getElementById("mesh-top").setAttribute("d", topMesh());
document.getElementById("mesh-front").setAttribute("d", frontMesh());
document.getElementById("mesh-left").setAttribute("d", leftMesh());
```
